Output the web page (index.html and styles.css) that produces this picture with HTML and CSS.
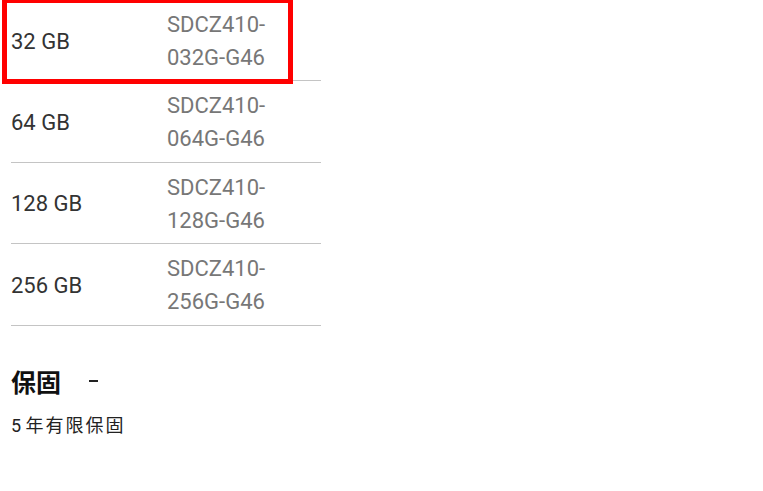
FILE: index.html
```html
<!DOCTYPE html>
<html lang="zh-Hant">
<head>
  <meta charset="UTF-8">
  <meta name="viewport" content="width=device-width, initial-scale=1.0">
  <title>SanDisk Ultra Fit 規格</title>
  <link rel="stylesheet" href="styles.css">
</head>
<body>
  <div class="specs">
    <div class="spec-row">
      <span class="capacity">32 GB</span>
      <span class="part-no">SDCZ410-032G-G46</span>
      <div class="highlight-box"></div>
    </div>
    <div class="spec-row">
      <span class="capacity">64 GB</span>
      <span class="part-no">SDCZ410-064G-G46</span>
    </div>
    <div class="spec-row">
      <span class="capacity">128 GB</span>
      <span class="part-no">SDCZ410-128G-G46</span>
    </div>
    <div class="spec-row">
      <span class="capacity">256 GB</span>
      <span class="part-no">SDCZ410-256G-G46</span>
    </div>
  </div>

  <div class="warranty">
    <h2 class="warranty-title">保固 <span class="toggle"></span></h2>
    <p class="warranty-text">5 年有限保固</p>
  </div>
</body>
</html>
```

FILE: styles.css
```css
body {
  margin: 0;
  font-family: Roboto, "Noto Sans CJK TC", sans-serif;
  color: #222;
  background: #fff;
}
.specs {
  margin-left: 11px;
  width: 310px;
}
.spec-row {
  position: relative;
  display: grid;
  grid-template-columns: 156px 1fr;
  align-items: center;
  padding: 8px 0 6.4px;
  border-bottom: 1px solid #c4c4c4;
  font-size: 22px;
  line-height: 33px;
}
.capacity {
  color: #333;
}
.part-no {
  color: #777;
}
/* red frame drawn over the first row */
.highlight-box {
  position: absolute;
  left: -9px;
  top: -2px;
  width: 291px;
  height: 86px;
  box-sizing: border-box;
  border: 5px solid #f00;
}
.warranty {
  margin: 37px 0 0 11px;
}
.warranty-title {
  display: flex;
  align-items: center;
  gap: 28px;
  margin: 0;
  font-family: "Noto Sans CJK TC", sans-serif;
  font-size: 25px;
  line-height: 36px;
  font-weight: 700;
  color: #111;
}
.toggle {
  width: 9px;
  height: 2px;
  background: #222;
}
.warranty-text {
  margin: 14px 0 0;
  font-size: 18px;
  line-height: 26px;
  letter-spacing: 2px;
  word-spacing: -4px;
  color: #222;
}
```
